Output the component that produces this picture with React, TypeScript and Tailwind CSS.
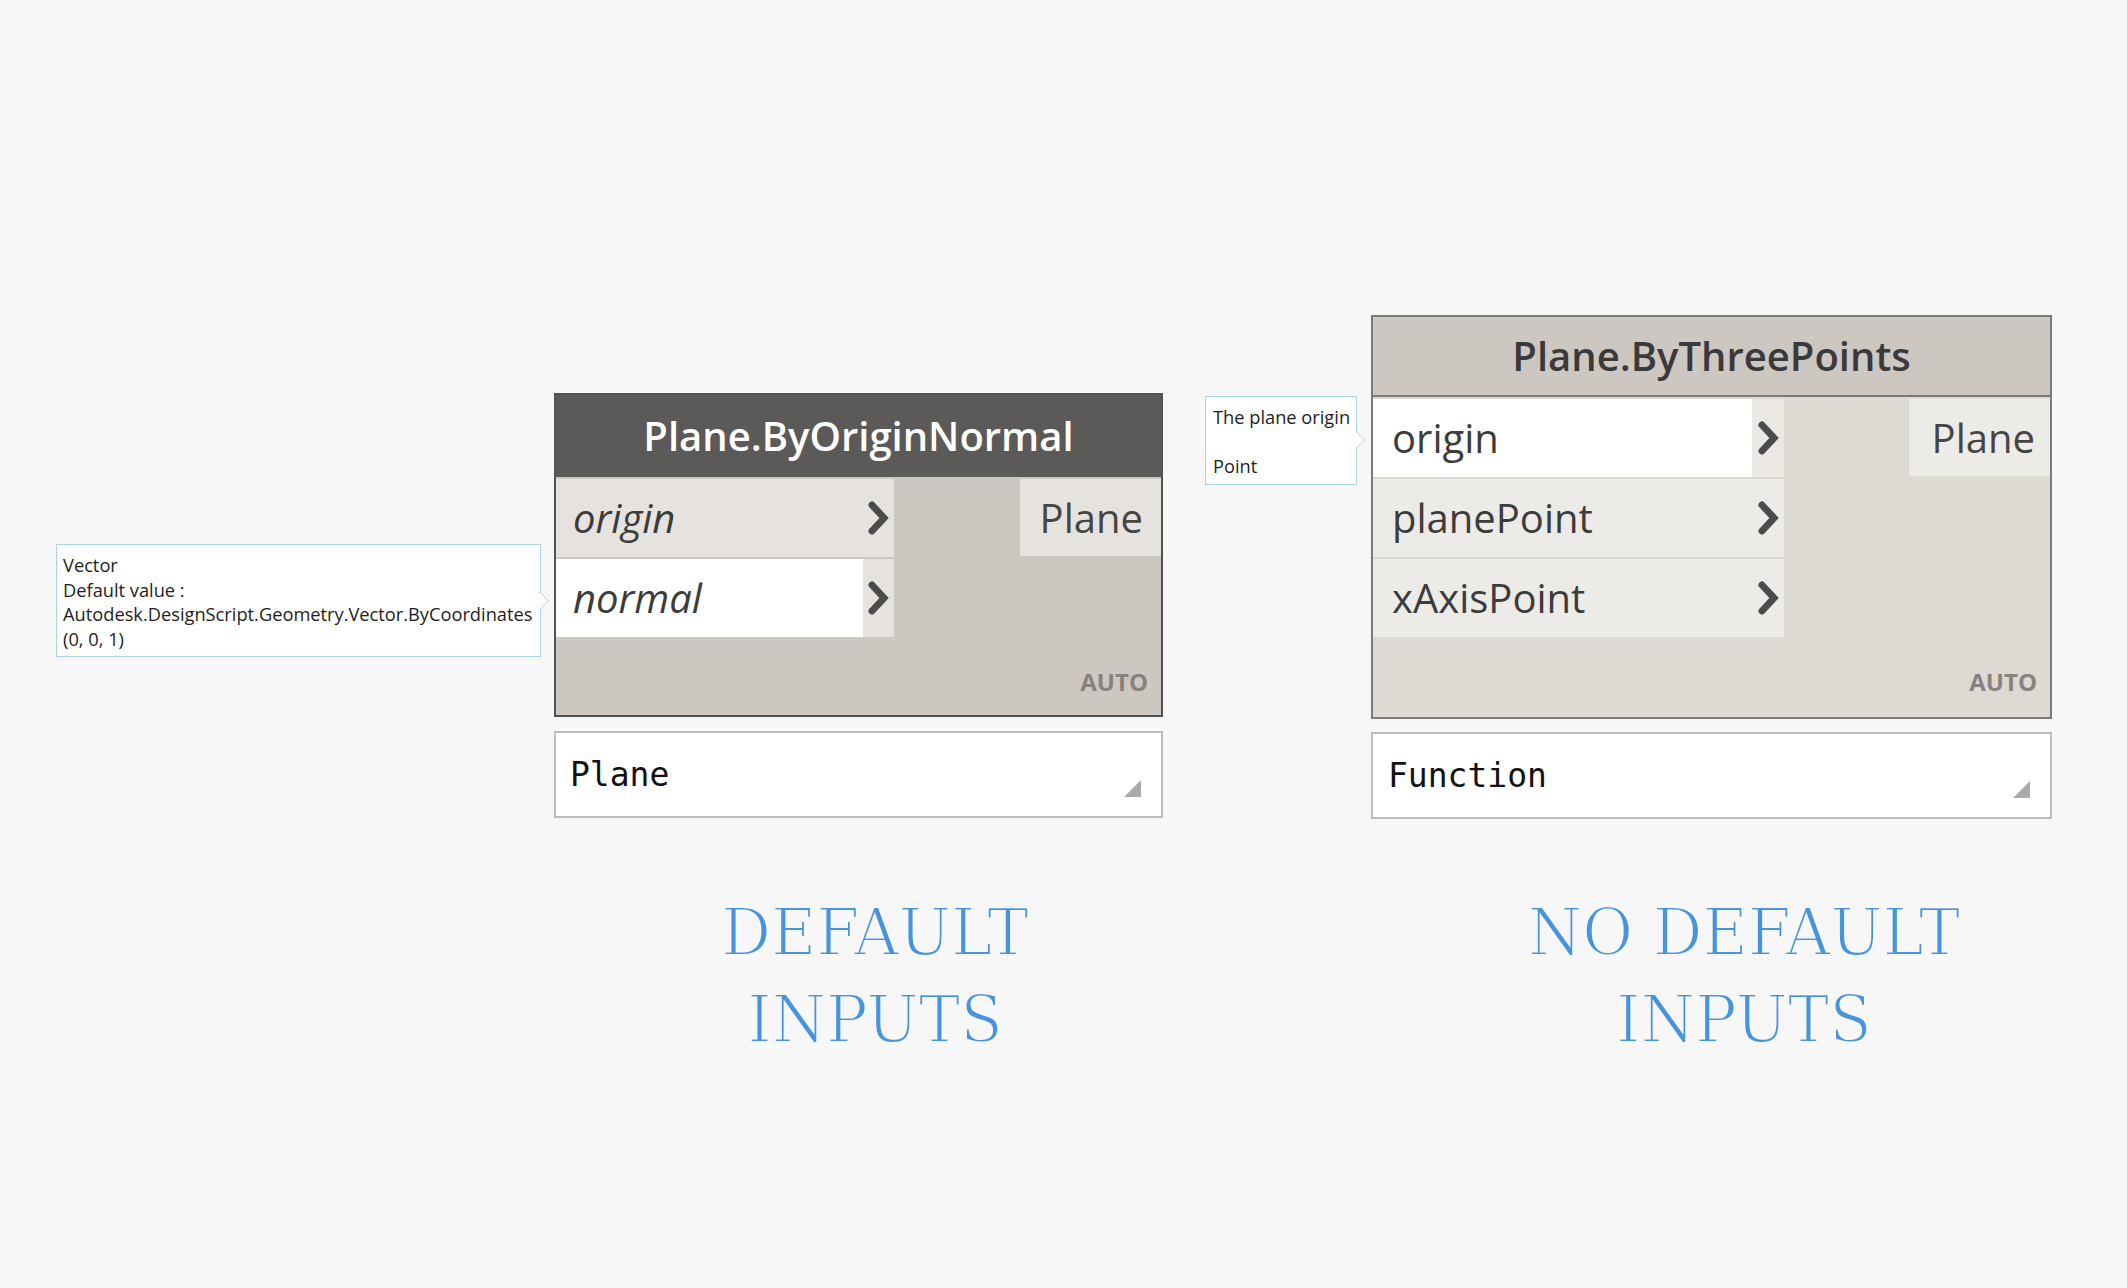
import React from "react";

const Chevron = () => (
  <svg width="23" height="34" viewBox="0 0 23 34" className="block">
    <polyline
      points="5,4 17,17 5,30"
      fill="none"
      stroke="#4b4b4b"
      strokeWidth="7"
      strokeLinecap="round"
      strokeLinejoin="miter"
    />
  </svg>
);

const TipArrow = () => (
  <svg
    width="11"
    height="20"
    viewBox="0 0 11 20"
    className="absolute left-full top-1/2 -ml-[1px] -translate-y-1/2 block"
  >
    <path d="M0.5,1 L9.5,10 L0.5,19" fill="#ffffff" stroke="#a9d4e6" strokeWidth="1" />
  </svg>
);

type RowProps = {
  label: string;
  labelClass: string;
  portClass: string;
  textClass: string;
};

const Row = ({ label, labelClass, portClass, textClass }: RowProps) => (
  <div className="flex h-[78px]">
    <div className={labelClass}>
      <span className={textClass}>{label}</span>
    </div>
    <div className={portClass}>
      <Chevron />
    </div>
  </div>
);

const Grip = () => (
  <svg width="17" height="17" viewBox="0 0 17 17" className="absolute right-[20px] bottom-[19px] block">
    <polygon points="17,0 17,17 0,17" fill="#a9a9a9" />
  </svg>
);

export default function App() {
  return (
    <div className="relative w-[2127px] h-[1288px] overflow-hidden bg-[#f7f7f7] font-['Open_Sans',sans-serif]">
      {/* Left tooltip */}
      <div className="absolute left-[56px] top-[544px] w-[485px] border border-[#a9d4e6] bg-white pl-[6px] pt-[8px] pb-[5px] text-[18.25px] leading-[24.5px] text-[#1e1e1e]">
        <div>Vector</div>
        <div>Default value :</div>
        <div>Autodesk.DesignScript.Geometry.Vector.ByCoordinates</div>
        <div>(0, 0, 1)</div>
        <TipArrow />
      </div>

      {/* Right tooltip */}
      <div className="absolute left-[1205px] top-[396px] w-[152px] border border-[#a9d4e6] bg-white pl-[7px] pt-[8px] pb-[5px] text-[18.25px] leading-[24.5px] text-[#1e1e1e]">
        <div>The plane origin</div>
        <div className="h-[24.5px]" />
        <div>Point</div>
        <TipArrow />
      </div>

      {/* Left node group */}
      <div className="absolute left-[554px] top-[393px] w-[609px] flex flex-col">
        <div className="flex flex-col border-2 border-[#525252]">
          <div className="h-[82px] bg-[#5b5a58] flex items-center justify-center text-white text-[40px] font-semibold leading-none">
            Plane.ByOriginNormal
          </div>
          <div className="bg-[#ccc7c1] pt-[2px] flex flex-col">
            <div className="flex">
              <div className="w-[338px] flex flex-col gap-[2px]">
                <Row
                  label="origin"
                  labelClass="flex-1 flex items-center pl-[17px] bg-[#e6e3df]"
                  portClass="w-[31px] flex items-center justify-center bg-[#e6e3df]"
                  textClass="italic text-[40px] leading-none text-[#3c3c3c]"
                />
                <Row
                  label="normal"
                  labelClass="flex-1 flex items-center pl-[17px] bg-white"
                  portClass="w-[31px] flex items-center justify-center bg-[#e6e3df]"
                  textClass="italic text-[40px] leading-none text-[#3c3c3c]"
                />
              </div>
              <div className="flex-1" />
              <div className="w-[141px] h-[77px] bg-[#e6e3df] flex items-center justify-end pr-[18px] text-[40px] leading-none text-[#454545]">
                Plane
              </div>
            </div>
            <div className="h-[78px] flex items-start justify-end pt-[33px] pr-[13px] text-[24px] leading-[24px] font-bold text-[#87827c]">
              AUTO
            </div>
          </div>
        </div>
        <div className="relative mt-[14px] h-[87px] border-2 border-[#bdbdbd] bg-white flex items-center pl-[14px] font-['DejaVu_Sans_Mono',monospace] text-[33px] text-[#111111]">
          Plane
          <Grip />
        </div>
        <div className="mt-[71px] pl-[35px] text-center font-['DejaVu_Serif',serif] text-[66px] leading-[87px] text-[#4694dc] scale-x-[0.94] [-webkit-text-stroke:2px_#f7f7f7]">
          DEFAULT
          <br />
          INPUTS
        </div>
      </div>

      {/* Right node group */}
      <div className="absolute left-[1371px] top-[315px] w-[681px] flex flex-col">
        <div className="flex flex-col border-2 border-[#7a7a7a]">
          <div className="h-[78px] bg-[#ccc7c0] border-b-2 border-[#7a7a7a] box-content flex items-center justify-center text-[#3a3a3a] text-[40px] font-semibold leading-none">
            Plane.ByThreePoints
          </div>
          <div className="bg-[#ddd9d3] pt-[2px] flex flex-col">
            <div className="flex">
              <div className="w-[411px] flex flex-col gap-[2px]">
                <Row
                  label="origin"
                  labelClass="flex-1 flex items-center pl-[19px] bg-white"
                  portClass="w-[32px] flex items-center justify-center bg-[#ebe8e4]"
                  textClass="text-[40px] leading-none text-[#3c3c3c]"
                />
                <Row
                  label="planePoint"
                  labelClass="flex-1 flex items-center pl-[19px] bg-[#edebe8]"
                  portClass="w-[32px] flex items-center justify-center bg-[#edebe8]"
                  textClass="text-[40px] leading-none text-[#3c3c3c]"
                />
                <Row
                  label="xAxisPoint"
                  labelClass="flex-1 flex items-center pl-[19px] bg-[#edebe8]"
                  portClass="w-[32px] flex items-center justify-center bg-[#edebe8]"
                  textClass="text-[40px] leading-none text-[#3c3c3c]"
                />
              </div>
              <div className="flex-1" />
              <div className="w-[141px] h-[77px] bg-[#edebe8] flex items-center justify-end pr-[15px] text-[40px] leading-none text-[#454545]">
                Plane
              </div>
            </div>
            <div className="h-[80px] flex items-start justify-end pt-[33px] pr-[13px] text-[24px] leading-[24px] font-bold text-[#87827c]">
              AUTO
            </div>
          </div>
        </div>
        <div className="relative mt-[13px] h-[87px] border-2 border-[#bdbdbd] bg-white flex items-center pl-[15px] font-['DejaVu_Sans_Mono',monospace] text-[33px] text-[#111111]">
          Function
          <Grip />
        </div>
        <div className="mt-[70px] pl-[69px] text-center font-['DejaVu_Serif',serif] text-[66px] leading-[87px] text-[#4694dc] scale-x-[0.94] [-webkit-text-stroke:2px_#f7f7f7]">
          NO DEFAULT
          <br />
          INPUTS
        </div>
      </div>
    </div>
  );
}
